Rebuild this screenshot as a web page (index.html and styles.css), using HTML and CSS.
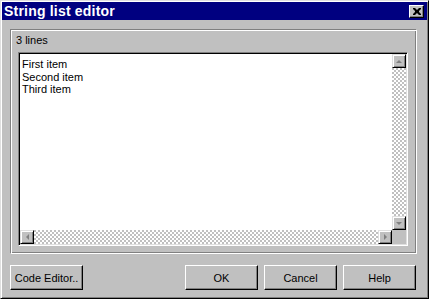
FILE: index.html
```html
<!DOCTYPE html>
<html lang="en">
<head>
  <meta charset="UTF-8" />
  <title>String list editor</title>
  <link rel="stylesheet" href="styles.css">
</head>
<body>

  <div class="window">
    <!-- Title bar -->
    <div class="titlebar">
      <span class="title">String list editor</span>
      <button class="btn-close" aria-label="Close">
        <svg viewBox="0 0 8 7" width="8" height="7">
          <path d="M0 0h2l2 2 2-2h2v1l-2 2v1l2 2v1h-2l-2-2-2 2h-2v-1l2-2v-1l-2-2z" fill="#000"/>
        </svg>
      </button>
    </div>

    <div class="content">
      <!-- Group with the memo -->
      <section class="group">
        <div class="line-count">3 lines</div>
        <div class="memo">
          <div class="memo-text">
            <div>First item</div>
            <div>Second item</div>
            <div>Third item</div>
          </div>
          <div class="vscroll">
            <div class="sbtn"><span class="arrow up"></span></div>
            <div class="track"></div>
            <div class="sbtn"><span class="arrow down"></span></div>
          </div>
          <div class="hscroll">
            <div class="sbtn"><span class="arrow left"></span></div>
            <div class="track"></div>
            <div class="sbtn"><span class="arrow right"></span></div>
          </div>
          <div class="corner"></div>
        </div>
      </section>

      <!-- Buttons -->
      <div class="actions">
        <button class="btn">Code Editor..</button>
        <div class="actions-right">
          <button class="btn">OK</button>
          <button class="btn">Cancel</button>
          <button class="btn">Help</button>
        </div>
      </div>
    </div>
  </div>

</body>
</html>
```

FILE: styles.css
```css
/* Paleta Win95 */
:root {
  --face: #c0c0c0;
  --light: #dfdfdf;
  --shadow: #808080;
  --dark: #000000;
  --title: #000080;
}

* {
  box-sizing: border-box;
  margin: 0;
  padding: 0;
}
body {
  background: var(--face);
  font-family: 'Liberation Sans', Arial, sans-serif;
  font-size: 11px;
  color: #000;
}

/* Janela */
.window {
  width: 429px;
  height: 299px;
  background: var(--face);
  border: 1px solid;
  border-color: var(--light) var(--dark) var(--dark) var(--light);
  box-shadow: inset 1px 1px #fff, inset -1px -1px var(--shadow);
  padding: 1px;
  display: flex;
  flex-direction: column;
}

/* Barra de titulo */
.titlebar {
  height: 18px;
  background: var(--title);
  color: #fff;
  display: flex;
  align-items: center;
  justify-content: space-between;
  padding: 0 3px 0 2px;
}
.title {
  font-weight: bold;
  font-size: 14px;
  letter-spacing: 0.2px;
}
.btn-close {
  width: 15px;
  height: 13px;
  background: var(--face);
  border: 1px solid;
  border-color: #fff var(--dark) var(--dark) #fff;
  box-shadow: inset -1px -1px var(--shadow);
  display: flex;
  align-items: center;
  justify-content: center;
}

.content {
  flex: 1;
  padding: 9px 10px 0 8px;
  display: flex;
  flex-direction: column;
}

/* Grupo */
.group {
  height: 225px;
  border: 1px solid;
  border-color: var(--shadow) #fff #fff var(--shadow);
  box-shadow: inset 1px 1px #fff, inset -1px -1px var(--shadow);
  padding: 4px 8px 7px 7px;
  display: flex;
  flex-direction: column;
}
.line-count {
  height: 12px;
  line-height: 12px;
  margin-left: -2px;
  margin-bottom: 6px;
}

/* Memo */
.memo {
  flex: 1;
  background: #fff;
  border: 1px solid;
  border-color: var(--shadow) #fff #fff var(--shadow);
  box-shadow: inset 1px 1px var(--dark), inset -1px -1px var(--light);
  padding: 1px;
  display: grid;
  grid-template-columns: 1fr 14px;
  grid-template-rows: 1fr 14px;
}
.memo-text {
  padding: 4px 2px;
  line-height: 12.5px;
}
.vscroll, .hscroll {
  display: flex;
  background: conic-gradient(var(--face) 25%, #fff 0 50%, var(--face) 0 75%, #fff 0) 0 0 / 4px 4px;
}
.vscroll { flex-direction: column; }
.track { flex: 1; }
.corner { background: var(--face); }

.sbtn {
  width: 14px;
  height: 14px;
  background: var(--face);
  border: 1px solid;
  border-color: var(--light) var(--dark) var(--dark) var(--light);
  box-shadow: inset 1px 1px #fff, inset -1px -1px var(--shadow);
  display: flex;
  align-items: center;
  justify-content: center;
}
.arrow {
  width: 0;
  height: 0;
  border: 3px solid transparent;
}
.arrow.up { border-bottom-color: var(--shadow); border-top-width: 0; }
.arrow.down { border-top-color: var(--shadow); border-bottom-width: 0; }
.arrow.left { border-right-color: var(--shadow); border-left-width: 0; }
.arrow.right { border-left-color: var(--shadow); border-right-width: 0; }

/* Botoes */
.actions {
  margin-top: 11px;
  display: flex;
  justify-content: space-between;
  padding-right: 1px;
}
.actions-right {
  display: flex;
  gap: 6px;
}
.btn {
  width: 73px;
  height: 25px;
  background: var(--face);
  font-family: inherit;
  font-size: 11px;
  color: #000;
  border: 1px solid;
  border-color: #fff var(--dark) var(--dark) #fff;
  box-shadow: inset -1px -1px var(--shadow);
}
```
